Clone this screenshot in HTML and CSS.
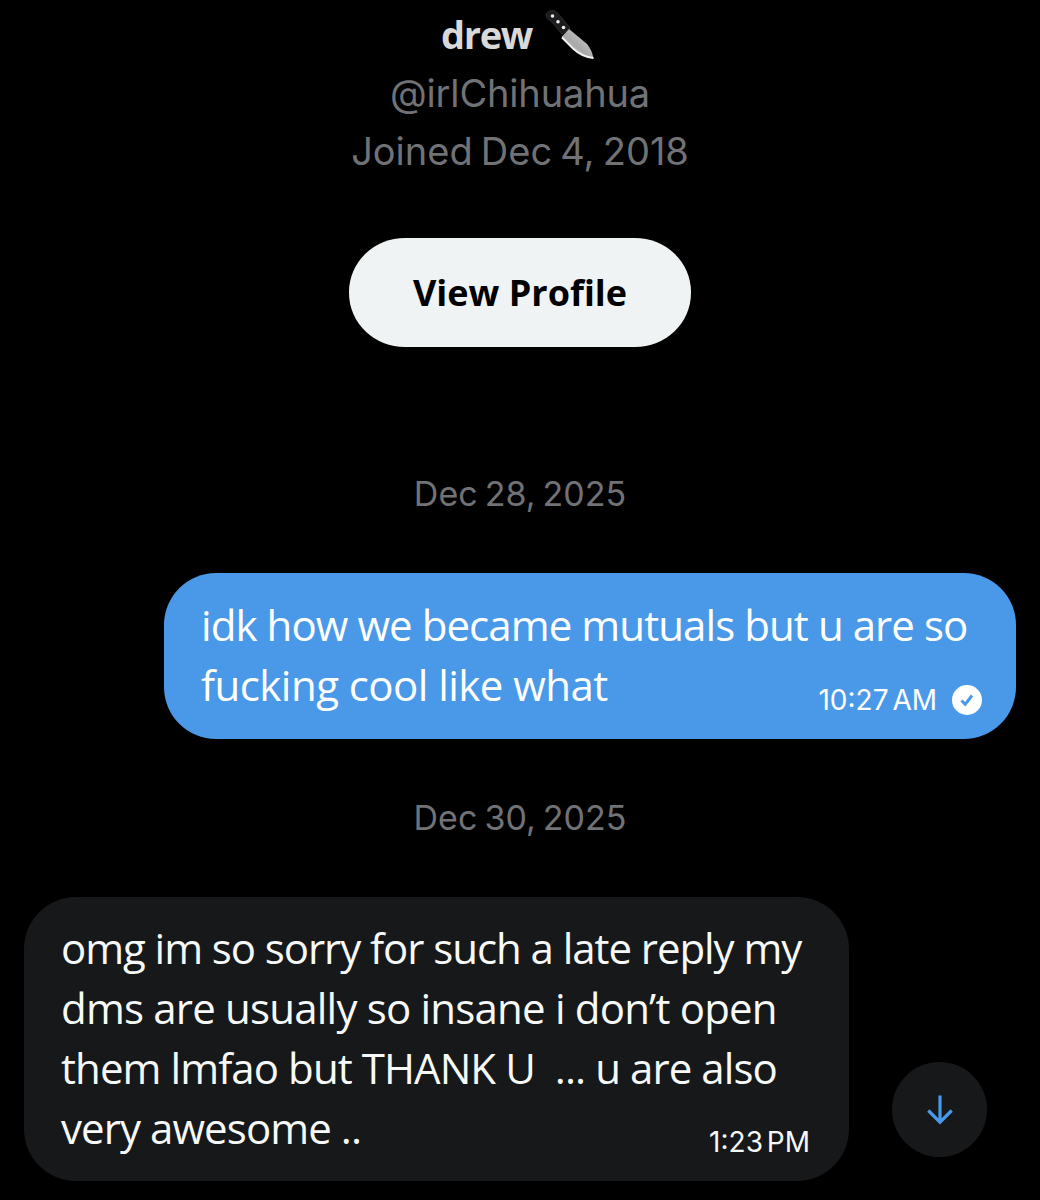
FILE: index.html
```html
<!DOCTYPE html>
<html lang="en">
<head>
    <meta charset="UTF-8">
    <meta name="viewport" content="width=device-width, initial-scale=1.0">
    <title>drew</title>
    <link rel="stylesheet" href="styles.css">
</head>
<body>
    <main class="chat">
        <header class="profile">
            <h1 class="name">
                <span>drew</span>
                <svg class="knife" viewBox="0 0 50 50" aria-hidden="true">
                    <defs>
                        <linearGradient id="blade" x1="0" y1="1" x2="1" y2="0">
                            <stop offset="0" stop-color="#e4e4e4"/>
                            <stop offset="0.45" stop-color="#a8a8a8"/>
                            <stop offset="1" stop-color="#dcdcdc"/>
                        </linearGradient>
                    </defs>
                    <path d="M1 4 L6 0 C10 0 13 3 16 7 L25 18 L17 24 L6 11 Q1 9 1 4Z" fill="#1c1c1e" stroke="#343436" stroke-width="0.8"/>
                    <path d="M24 19 L42 34 Q47 40 48.500 48.500 Q38 48 28 39 L16.500 27Z" fill="url(#blade)"/>
                    <path d="M17 27.500 L28 38.500 Q37 47 48.500 48" fill="none" stroke="#f2f2f2" stroke-width="1.800"/>
                    <circle cx="7.500" cy="6" r="1.800" fill="#ececec"/>
                    <circle cx="13" cy="11.800" r="1.800" fill="#ececec"/>
                    <circle cx="18.500" cy="17.500" r="1.800" fill="#ececec"/>
                </svg>
            </h1>
            <p class="handle">@irlChihuahua</p>
            <p class="joined">Joined Dec 4, 2018</p>
            <button class="view-profile">View Profile</button>
        </header>

        <p class="date">Dec 28, 2025</p>

        <div class="bubble sent">
            <p class="text">idk how we became mutuals but u are so<br><span class="wide">fucking cool like what</span></p>
            <div class="meta">
                <span>10:27 AM</span>
                <svg class="check" viewBox="0 0 30 30" aria-hidden="true">
                    <circle cx="15" cy="15" r="15" fill="#fff"/>
                    <path d="M9.500 15.500 L13.200 19.300 L20 10.500" fill="none" stroke="#4a99e9" stroke-width="3"/>
                </svg>
            </div>
        </div>

        <p class="date second">Dec 30, 2025</p>

        <div class="bubble received">
            <p class="text"><span class="tight">omg im so sorry for such a late reply my</span><br><span class="loose">dms are usually so insane i don’t open</span><br>them lmfao but THANK U&nbsp; ... u are also<br>very awesome ..</p>
            <div class="meta">
                <span>1:23 PM</span>
            </div>
        </div>

        <button class="scroll-down" aria-label="Scroll down">
            <svg viewBox="0 0 28 30" aria-hidden="true">
                <path d="M14 0.500 V27 M2.300 15.500 L14 27.200 L25.700 15.500" fill="none" stroke="#4a99e9" stroke-width="3.200"/>
            </svg>
        </button>
    </main>
</body>
</html>
```

FILE: styles.css
```css
* {
    box-sizing: border-box;
}
body {
    margin: 0;
    background-color: #000;
    color: #f7f9f9;
    font-family: "Open Sans", "Noto Sans", sans-serif;
}
h1, p {
    margin: 0;
}
button {
    border: none;
    padding: 0;
    font-family: inherit;
    cursor: pointer;
}
.chat {
    position: relative;
    display: flex;
    flex-direction: column;
    height: 1200px;
    padding: 6px 24px 0;
    overflow: hidden;
}
.profile {
    display: flex;
    flex-direction: column;
    align-items: center;
}
.name {
    display: flex;
    align-items: center;
    gap: 13px;
    height: 58px;
    padding-right: 4px;
    font-size: 38px;
    line-height: 56px;
    letter-spacing: -1.3px;
    font-weight: 700;
    color: #d9d9d9;
}
.name span {
    padding-bottom: 2px;
}
.knife {
    width: 50px;
    height: 50px;
}
.handle, .joined, .date, .meta {
    font-family: Inter, "Open Sans", sans-serif;
}
.handle, .joined {
    font-size: 38px;
    line-height: 58px;
    color: #717276;
}
.handle {
    letter-spacing: -0.15px;
}
.joined {
    word-spacing: -2.5px;
}
.view-profile {
    width: 342px;
    height: 109px;
    margin-top: 58px;
    border-radius: 56px / 54px;
    background-color: #eff3f4;
    color: #000;
    font-size: 36px;
    font-weight: 700;
}
.date {
    height: 50px;
    margin-top: 122px;
    font-size: 34px;
    line-height: 50px;
    word-spacing: -2.5px;
    text-align: center;
    color: #717276;
}
.date.second {
    margin-top: 54px;
}
.bubble {
    display: flex;
    justify-content: space-between;
    align-items: flex-end;
    border-radius: 52px;
}
.text {
    align-self: flex-start;
    flex: none;
    width: 0;
    font-size: 42px;
    line-height: 60px;
    letter-spacing: -0.92px;
    white-space: nowrap;
}
.wide {
    letter-spacing: -0.55px;
}
.loose {
    letter-spacing: -0.8px;
}
.tight {
    letter-spacing: -1.06px;
}
.meta {
    display: flex;
    align-items: center;
    gap: 15px;
    font-size: 28px;
    line-height: 40px;
    word-spacing: -4px;
    white-space: nowrap;
}
.sent {
    align-self: flex-end;
    width: 852px;
    height: 166px;
    margin-top: 54px;
    padding: 22px 34px 19px 37px;
    background-color: #4a99e9;
    color: #fff;
}
.received {
    width: 825px;
    height: 284px;
    margin-top: 54px;
    padding: 21px 39px 19px 37px;
    background-color: #16181a;
}
.check {
    flex: none;
    width: 30px;
    height: 30px;
}
.scroll-down {
    position: absolute;
    left: 892px;
    top: 1062px;
    display: flex;
    justify-content: center;
    align-items: center;
    width: 95px;
    height: 95px;
    border-radius: 50%;
    background-color: #16181a;
}
.scroll-down svg {
    width: 28px;
    height: 30px;
}
```
